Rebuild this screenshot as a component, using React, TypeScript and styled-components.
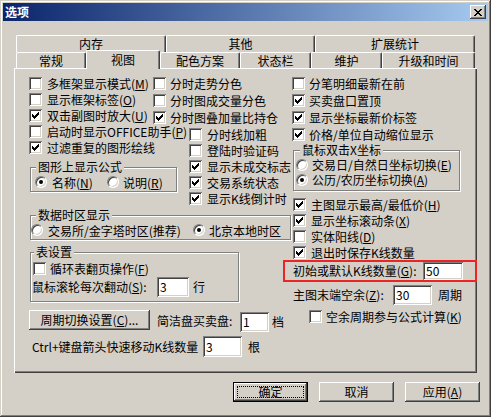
import React from "react";
import styled, { createGlobalStyle } from "styled-components";

const FONT = `"Noto Sans CJK SC", "Noto Sans", sans-serif`;
const FACE = "#D4D0C8";

const GlobalStyle = createGlobalStyle`
  html, body { margin: 0; padding: 0; background: ${FACE}; }
  body { font-family: ${FONT}; font-size: 12px; color: #000; }
  * { box-sizing: border-box; }
  u { text-decoration: underline; text-underline-offset: 1px; }
`;

const Window = styled.div`
  width: 491px;
  height: 417px;
  background: ${FACE};
  padding: 3px;
  display: flex;
  flex-direction: column;
  box-shadow: inset -1px -1px #404040, inset 1px 1px ${FACE}, inset -2px -2px #808080, inset 2px 2px #fff;
`;

const TitleBar = styled.div`
  height: 18px;
  flex: none;
  display: flex;
  align-items: center;
  justify-content: space-between;
  padding: 0 2px 0 2px;
  background: linear-gradient(to right, #0a246a, #a6caf0);
`;

const TitleText = styled.span`
  color: #fff;
  font-weight: bold;
  font-size: 12px;
  line-height: 18px;
`;

const CloseBtn = styled.div`
  width: 16px;
  height: 14px;
  background: ${FACE};
  display: flex;
  align-items: center;
  justify-content: center;
  box-shadow: inset -1px -1px #404040, inset 1px 1px #fff, inset -2px -2px #808080, inset 2px 2px ${FACE};
`;

const Body = styled.div`
  flex: 1;
  display: flex;
  flex-direction: column;
  padding: 14px 11px 0 11px;
`;

const TabStrip = styled.div`
  margin-left: 2px;
  width: 459px;
  display: flex;
  flex-direction: column;
`;

const TabRow = styled.div`
  display: flex;
`;

const Tab = styled.div<{ $w: number; $active?: boolean; $back?: boolean }>`
  width: ${(p) => p.$w}px;
  height: ${(p) => (p.$active ? 19 : p.$back ? 17 : 16)}px;
  margin-top: ${(p) => (p.$active ? -2 : 0)}px;
  margin-bottom: ${(p) => (p.$active ? -1 : 0)}px;
  position: relative;
  z-index: ${(p) => (p.$active ? 3 : 1)};
  background: ${FACE};
  border-top: 1px solid #fff;
  border-left: 1px solid #fff;
  border-right: 1px solid #404040;
  border-radius: 2px 2px 0 0;
  box-shadow: inset -1px 0 #808080;
  text-align: center;
  line-height: ${(p) => (p.$back ? 16 : 15)}px;
  padding-top: ${(p) => (p.$active ? 1 : 0)}px;
  white-space: nowrap;
`;

const Panel = styled.div`
  width: 463px;
  height: 305px;
  display: flex;
  padding: 7px 0 0 15px;
  box-shadow: inset 1px 1px #fff, inset -1px -1px #404040, inset -2px -2px #808080;
`;

const LeftArea = styled.div`
  width: 263px;
  flex: none;
  display: flex;
  flex-direction: column;
`;

const RightArea = styled.div`
  flex: 1;
  display: flex;
  flex-direction: column;
`;

const TopSplit = styled.div`
  display: flex;
`;

const ColA = styled.div`
  width: 124px;
  flex: none;
  display: flex;
  flex-direction: column;
`;

const ColB = styled.div`
  flex: 1;
  display: flex;
  flex-direction: column;
`;

const Indent = styled.div`
  margin-left: 36px;
  display: flex;
  flex-direction: column;
`;

const Row = styled.div<{ $h?: number; $ml?: number; $mt?: number; $gap?: number }>`
  display: flex;
  align-items: center;
  height: ${(p) => p.$h ?? 16}px;
  margin-left: ${(p) => p.$ml ?? 0}px;
  margin-top: ${(p) => p.$mt ?? 0}px;
  gap: ${(p) => p.$gap ?? 0}px;
  white-space: nowrap;
`;

const Label = styled.span`
  white-space: nowrap;
  line-height: 13px;
`;

const Box = styled.span`
  flex: none;
  width: 13px;
  height: 13px;
  background: #fff;
  display: inline-flex;
  align-items: center;
  justify-content: center;
  box-shadow: inset 1px 1px #808080, inset -1px -1px #fff, inset 2px 2px #404040, inset -2px -2px ${FACE};
`;

const RadioDot = styled.span<{ $on?: boolean }>`
  flex: none;
  width: 12px;
  height: 12px;
  border-radius: 50%;
  background: #fff;
  position: relative;
  border: 1px solid;
  border-color: #808080 #fff #fff #808080;
  box-shadow: inset 1px 1px #404040, inset -1px -1px ${FACE};
  &::after {
    content: "";
    display: ${(p) => (p.$on ? "block" : "none")};
    position: absolute;
    left: 3px;
    top: 3px;
    width: 4px;
    height: 4px;
    border-radius: 50%;
    background: #000;
  }
`;

const RadioWrap = styled.div<{ $w?: number; $gap?: number }>`
  display: flex;
  align-items: center;
  gap: ${(p) => p.$gap ?? 5}px;
  ${(p) => (p.$w ? `width: ${p.$w}px; flex: none;` : "")}
  white-space: nowrap;
`;

const Group = styled.div<{ $w: number; $mt: number; $ml?: number; $pb?: number; $pl?: number }>`
  width: ${(p) => p.$w}px;
  margin-top: ${(p) => p.$mt}px;
  margin-left: ${(p) => p.$ml ?? 1}px;
  padding-bottom: ${(p) => p.$pb ?? 1}px;
  padding-left: ${(p) => p.$pl ?? 0}px;
  border: 1px solid #808080;
  box-shadow: inset 1px 1px #fff, 1px 1px #fff;
  display: flex;
  flex-direction: column;
`;

const Legend = styled.span<{ $ml: number }>`
  align-self: flex-start;
  margin: -7px 0 0 ${(p) => p.$ml}px;
  padding: 0 2px;
  height: 12px;
  line-height: 12px;
  background: ${FACE};
  white-space: nowrap;
`;

const TextBox = styled.div<{ $w: number; $h: number; $mt?: number }>`
  flex: none;
  width: ${(p) => p.$w}px;
  height: ${(p) => p.$h}px;
  margin-top: ${(p) => p.$mt ?? 0}px;
  background: #fff;
  padding-left: 3px;
  line-height: ${(p) => p.$h}px;
  box-shadow: inset 1px 1px #808080, inset -1px -1px #fff, inset 2px 2px #404040, inset -2px -2px ${FACE};
`;

const PushButton = styled.button<{ $w: number; $default?: boolean }>`
  width: ${(p) => p.$w}px;
  height: 20px;
  flex: none;
  margin: 0;
  padding: 0;
  font-family: ${FONT};
  font-size: 12px;
  color: #000;
  background: ${FACE};
  border: ${(p) => (p.$default ? "1px solid #000" : "none")};
  box-shadow: inset -1px -1px #404040, inset 1px 1px #fff, inset -2px -2px #808080, inset 2px 2px ${FACE};
  display: flex;
  align-items: center;
  justify-content: center;
  position: relative;
  line-height: 14px;
`;

const Focus = styled.span`
  position: absolute;
  left: 3px;
  top: 3px;
  right: 3px;
  bottom: 3px;
  border: 1px dotted #000;
`;

const ButtonBar = styled.div`
  margin-top: 9px;
  display: flex;
  justify-content: flex-end;
  gap: 11px;
  width: 466px;
`;

const RedBox = styled.div`
  margin-left: -9px;
  width: 194px;
  height: 22px;
  border: 2px solid #ec2424;
  display: flex;
  align-items: center;
  padding-left: 8px;
`;

const ToolRow = styled.div<{ $mt: number }>`
  display: flex;
  align-items: flex-start;
  margin-top: ${(p) => p.$mt}px;
  white-space: nowrap;
`;

const InlineLabel = styled.span<{ $w: number; $ml?: number; $mt?: number; $lh?: number }>`
  width: ${(p) => p.$w}px;
  flex: none;
  margin-left: ${(p) => p.$ml ?? 0}px;
  margin-top: ${(p) => p.$mt ?? 0}px;
  line-height: ${(p) => p.$lh ?? 20}px;
  white-space: nowrap;
`;

const acc = (c: string) => (
  <>
    (<u>{c}</u>)
  </>
);

function CheckMark() {
  const tops = [2, 3, 4, 3, 2, 1, 0];
  return (
    <svg width="7" height="7" viewBox="0 0 7 7" shapeRendering="crispEdges">
      {tops.map((t, i) => (
        <rect key={i} x={i} y={t} width="1" height="3" fill="#000" />
      ))}
    </svg>
  );
}

function CheckBox({ on }: { on?: boolean }) {
  return <Box>{on && <CheckMark />}</Box>;
}

function CloseGlyph() {
  const rows: number[][] = [
    [0, 1, 6, 7],
    [1, 2, 5, 6],
    [2, 3, 4, 5],
    [3, 4],
    [2, 3, 4, 5],
    [1, 2, 5, 6],
    [0, 1, 6, 7],
  ];
  return (
    <svg width="8" height="7" viewBox="0 0 8 7" shapeRendering="crispEdges">
      {rows.map((cols, y) =>
        cols.map((x) => <rect key={`${y}-${x}`} x={x} y={y} width="1" height="1" fill="#000" />)
      )}
    </svg>
  );
}

type CheckItemProps = {
  on?: boolean;
  h?: number;
  ml?: number;
  mt?: number;
  gap?: number;
  children: React.ReactNode;
};

function CheckItem({ on, h = 16, ml = 0, mt = 0, gap = 5, children }: CheckItemProps) {
  return (
    <Row $h={h} $ml={ml} $mt={mt} $gap={gap}>
      <CheckBox on={on} />
      <Label>{children}</Label>
    </Row>
  );
}

function Radio({ on, w, gap, children }: { on?: boolean; w?: number; gap?: number; children: React.ReactNode }) {
  return (
    <RadioWrap $w={w} $gap={gap}>
      <RadioDot $on={on} />
      <Label>{children}</Label>
    </RadioWrap>
  );
}

export default function App() {
  return (
    <>
      <GlobalStyle />
      <Window>
        <TitleBar>
          <TitleText>选项</TitleText>
          <CloseBtn>
            <CloseGlyph />
          </CloseBtn>
        </TitleBar>
        <Body>
          <TabStrip>
            <TabRow>
              <Tab $w={150} $back>内存</Tab>
              <Tab $w={149} $back>其他</Tab>
              <Tab $w={160} $back>扩展统计</Tab>
            </TabRow>
            <TabRow>
              <Tab $w={70}>常规</Tab>
              <Tab $w={74} $active>视图</Tab>
              <Tab $w={80}>配色方案</Tab>
              <Tab $w={71}>状态栏</Tab>
              <Tab $w={71}>维护</Tab>
              <Tab $w={93}>升级和时间</Tab>
            </TabRow>
          </TabStrip>
          <Panel>
            <LeftArea>
              <TopSplit>
                <ColA>
                  <CheckItem>多框架显示模式{acc("M")}</CheckItem>
                  <CheckItem>显示框架标签{acc("O")}</CheckItem>
                  <CheckItem on>双击副图时放大{acc("U")}</CheckItem>
                  <CheckItem>启动时显示OFFICE助手{acc("P")}</CheckItem>
                  <CheckItem on>过滤重复的图形绘线</CheckItem>
                  <Group $w={147} $mt={12}>
                    <Legend $ml={5}>图形上显示公式</Legend>
                    <Row $h={16} $mt={1} $ml={4}>
                      <Radio on w={72}>
                        名称{acc("N")}
                      </Radio>
                      <Radio gap={4}>说明{acc("R")}</Radio>
                    </Row>
                  </Group>
                </ColA>
                <ColB>
                  <CheckItem h={17} gap={4}>分时走势分色</CheckItem>
                  <CheckItem h={17} gap={4}>分时图成交量分色</CheckItem>
                  <CheckItem h={17} gap={4} on>
                    分时图叠加量比持仓
                  </CheckItem>
                  <Indent>
                    <CheckItem>分时线加粗</CheckItem>
                    <CheckItem>登陆时验证码</CheckItem>
                    <CheckItem on>显示未成交标志</CheckItem>
                    <CheckItem on>交易系统状态</CheckItem>
                    <CheckItem on>显示K线倒计时</CheckItem>
                  </Indent>
                </ColB>
              </TopSplit>
              <Group $w={261} $mt={9}>
                <Legend $ml={5}>数据时区显示</Legend>
                <Row $h={16} $mt={1}>
                  <Radio w={162}>交易所/金字塔时区(推荐)</Radio>
                  <Radio on gap={4}>
                    北京本地时区
                  </Radio>
                </Row>
              </Group>
              <Group $w={209} $mt={12} $pb={4}>
                <Legend $ml={3}>表设置</Legend>
                <CheckItem ml={2} mt={2} gap={4}>
                  循环表翻页操作{acc("F")}
                </CheckItem>
                <Row $h={20} $mt={1} $ml={1}>
                  <InlineLabel $w={125}>鼠标滚轮每次翻动{acc("S")}:</InlineLabel>
                  <TextBox $w={32} $h={20}>3</TextBox>
                  <InlineLabel $w={20} $ml={4}>
                    行
                  </InlineLabel>
                </Row>
              </Group>
              <ToolRow $mt={8}>
                <PushButton $w={121}>周期切换设置{acc("C")}...</PushButton>
                <InlineLabel $w={83} $ml={7} $mt={1}>
                  简洁盘买卖盘:
                </InlineLabel>
                <TextBox $w={29} $h={20} $mt={2}>1</TextBox>
                <InlineLabel $w={20} $ml={3} $mt={2}>
                  档
                </InlineLabel>
              </ToolRow>
              <ToolRow $mt={4}>
                <InlineLabel $w={171} $ml={3} $lh={21}>
                  Ctrl+键盘箭头快速移动K线数量
                </InlineLabel>
                <TextBox $w={39} $h={21}>3</TextBox>
                <InlineLabel $w={20} $ml={6} $lh={21}>
                  根
                </InlineLabel>
              </ToolRow>
            </LeftArea>
            <RightArea>
              <CheckItem h={17} gap={4}>分笔明细最新在前</CheckItem>
              <CheckItem h={17} gap={4} on>
                买卖盘口置顶
              </CheckItem>
              <CheckItem h={17} gap={4} on>
                显示坐标最新价标签
              </CheckItem>
              <CheckItem h={17} gap={4} on>
                价格/单位自动缩位显示
              </CheckItem>
              <Group $w={167} $mt={7} $pb={3} $pl={2}>
                <Legend $ml={4}>鼠标双击X坐标</Legend>
                <Row $h={15} $mt={1}>
                  <Radio gap={4}>交易日/自然日坐标切换{acc("E")}</Radio>
                </Row>
                <Row $h={15}>
                  <Radio on gap={4}>
                    公历/农历坐标切换{acc("A")}
                  </Radio>
                </Row>
              </Group>
              <CheckItem on ml={1} mt={5} gap={5}>
                主图显示最高/最低价{acc("H")}
              </CheckItem>
              <CheckItem on ml={1} gap={5}>
                显示坐标滚动条{acc("X")}
              </CheckItem>
              <CheckItem ml={1} gap={5}>
                实体阳线{acc("D")}
              </CheckItem>
              <CheckItem on ml={1} gap={5}>
                退出时保存K线数量
              </CheckItem>
              <RedBox>
                <InlineLabel $w={130} $lh={18}>
                  初始或默认K线数量{acc("G")}:
                </InlineLabel>
                <TextBox $w={40} $h={18}>50</TextBox>
              </RedBox>
              <ToolRow $mt={3}>
                <InlineLabel $w={100} $ml={1}>
                  主图末端空余{acc("Z")}:
                </InlineLabel>
                <TextBox $w={39} $h={20}>30</TextBox>
                <InlineLabel $w={30} $ml={6}>
                  周期
                </InlineLabel>
              </ToolRow>
              <CheckItem ml={17} mt={3} gap={4}>
                空余周期参与公式计算{acc("K")}
              </CheckItem>
            </RightArea>
          </Panel>
          <ButtonBar>
            <PushButton $w={75} $default>
              <Focus />
              确定
            </PushButton>
            <PushButton $w={75}>取消</PushButton>
            <PushButton $w={75}>应用{acc("A")}</PushButton>
          </ButtonBar>
        </Body>
      </Window>
    </>
  );
}
